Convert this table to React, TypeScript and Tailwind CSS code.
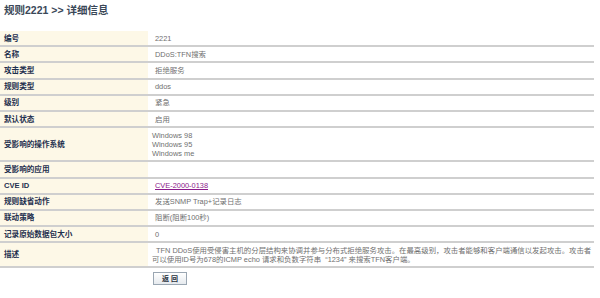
import React from "react";

const FONT = '"Liberation Sans", "Noto Sans CJK SC", sans-serif';

type Row = { label: string; value: React.ReactNode; indent?: boolean };

const rows: Row[] = [
  { label: "编号", value: "2221", indent: true },
  { label: "名称", value: "DDoS:TFN搜索", indent: true },
  { label: "攻击类型", value: "拒绝服务", indent: true },
  { label: "规则类型", value: "ddos", indent: true },
  { label: "级别", value: "紧急", indent: true },
  { label: "默认状态", value: "启用", indent: true },
  {
    label: "受影响的操作系统",
    value: (
      <>
        Windows 98
        <br />
        Windows 95
        <br />
        Windows me
      </>
    ),
  },
  { label: "受影响的应用", value: "" },
  {
    label: "CVE ID",
    value: <span className="text-[#8b1a8b] underline">CVE-2000-0138</span>,
    indent: true,
  },
  { label: "规则缺省动作", value: "发送SNMP Trap+记录日志", indent: true },
  { label: "联动策略", value: "阻断(阻断100秒)", indent: true },
  { label: "记录原始数据包大小", value: "0", indent: true },
  {
    label: "描述",
    value: (
      <>
        <span className="pl-[4px]">
          TFN DDoS使用受侵害主机的分层结构来协调并参与分布式拒绝服务攻击。在最高级别，攻击者能够和客户端通信以发起攻击。攻击者
        </span>
        <br />
        可以使用ID号为678的ICMP echo 请求和负数字符串 &nbsp;“1234” 来搜索TFN客户端。
      </>
    ),
  },
];

export default function App() {
  return (
    <div className="w-[600px] h-[298px] bg-white overflow-hidden" style={{ fontFamily: FONT }}>
      <div className="h-[31px] pl-[4px] pt-[4px] text-[10.5px] leading-[13px] font-bold text-[#3b4858]">
        规则2221 &gt;&gt; 详细信息
      </div>
      <div className="w-[594px]">
        {rows.map((r) => (
          <div key={r.label} className="flex border-b-2 border-[#cfcfcf]">
            <div className="w-[148px] shrink-0 bg-[#fdf8e7] pl-[4px] flex items-center text-[7.6px] font-bold text-[#1d2f4e] leading-[9px]">
              {r.label}
            </div>
            <div
              className={
                "flex-1 py-[2.6px] min-h-[14.2px] text-[7.4px] leading-[9px] text-[#6f6f6f] whitespace-nowrap " +
                (r.indent ? "pl-[7px]" : "pl-[4px]")
              }
            >
              {r.value}
            </div>
          </div>
        ))}
        <div className="flex pt-[4px]">
          <div className="w-[148px] shrink-0" />
          <div className="pl-[5px]">
            <button className="w-[34px] h-[13px] border border-[#9aa6b2] bg-gradient-to-b from-[#ffffff] to-[#e6eaee] text-[7px] leading-[11px] font-bold text-[#2a3340] flex items-center justify-center">
              返 回
            </button>
          </div>
        </div>
      </div>
    </div>
  );
}
